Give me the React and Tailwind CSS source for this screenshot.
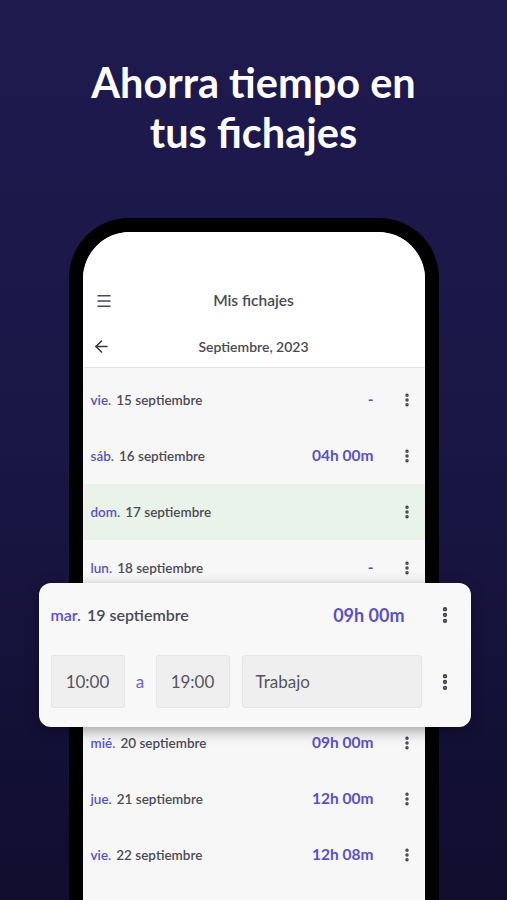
import { Menu, ArrowLeft, EllipsisVertical } from 'lucide-react';

const rows = [
  { dia: 'vie.', fecha: '15 septiembre', horas: '-' },
  { dia: 'sáb.', fecha: '16 septiembre', horas: '04h 00m' },
  { dia: 'dom.', fecha: '17 septiembre', horas: '', festivo: true },
  { dia: 'lun.', fecha: '18 septiembre', horas: '-' },
  { abierto: true },
  { dia: 'mié.', fecha: '20 septiembre', horas: '09h 00m' },
  { dia: 'jue.', fecha: '21 septiembre', horas: '12h 00m' },
  { dia: 'vie.', fecha: '22 septiembre', horas: '12h 08m' },
];

function Kebab({ className = '' }) {
  return <EllipsisVertical className={`text-[#3d3d45] ${className}`} strokeWidth={3.2} />;
}

function Fila({ r }) {
  return (
    <div className={`h-[56px] flex items-center pl-[8px] pr-[10px] ${r.festivo ? 'bg-[#e9f3e9]' : ''}`}>
      <div className="flex-1 flex items-baseline gap-[5px] text-[13.5px]">
        <span className="font-semibold text-[#5a51c4]">{r.dia}</span>
        <span className="font-semibold text-[#4b4b55]">{r.fecha}</span>
      </div>
      <span className="text-[15.5px] font-bold text-[#5a51c4]">{r.horas}</span>
      <div className="w-[41px] flex justify-end">
        <Kebab className="w-[16px] h-[16px]" />
      </div>
    </div>
  );
}

function Tarjeta() {
  return (
    <div className="absolute left-[-44px] right-[-46px] top-[-13px] bottom-[-12px] z-10 bg-[#f8f8f8] rounded-[12px] shadow-[0_4px_14px_rgba(0,0,0,0.35)] px-[12px] flex flex-col">
      <div className="h-[64px] flex items-center">
        <div className="flex-1 flex items-baseline gap-[6px] text-[16px]">
          <span className="font-semibold text-[#5a51c4]">mar.</span>
          <span className="font-semibold text-[#4b4b55]">19 septiembre</span>
        </div>
        <span className="text-[18px] font-bold text-[#5a51c4]">09h 00m</span>
        <div className="w-[54px] flex justify-end pr-[4px]">
          <Kebab className="w-[20px] h-[20px]" />
        </div>
      </div>
      <div className="flex items-center mt-[8px]">
        <div className="w-[74px] h-[53px] rounded-[3px] bg-[#efefef] border border-[#e6e6e6] flex items-center justify-center text-[17px] text-[#55555c]">10:00</div>
        <span className="w-[31px] text-center text-[17px] text-[#6a62c8]">a</span>
        <div className="w-[74px] h-[53px] rounded-[3px] bg-[#efefef] border border-[#e6e6e6] flex items-center justify-center text-[17px] text-[#55555c]">19:00</div>
        <div className="ml-[12px] w-[180px] h-[53px] rounded-[3px] bg-[#efefef] border border-[#e6e6e6] flex items-center pl-[13px] text-[17px] text-[#55555c]">Trabajo</div>
        <div className="flex-1 flex justify-end pr-[4px]">
          <Kebab className="w-[20px] h-[20px]" />
        </div>
      </div>
    </div>
  );
}

export default function App() {
  return (
    <div className="w-[507px] h-[900px] overflow-hidden bg-gradient-to-b from-[#1f1a4e] via-[#1a1645] to-[#100d2e] font-['Lato','Noto_Sans',sans-serif]">
      <h1 className="pt-[57px] text-center text-white text-[41.5px] leading-[50px] font-bold">
        Ahorra tiempo en<br />tus fichajes
      </h1>

      <div className="mt-[61px] mx-auto w-[370px] h-[700px] bg-black rounded-t-[60px] pt-[14px] px-[14px]">
        <div className="h-full bg-[#f7f7f7] rounded-t-[47px] flex flex-col">
          <div className="bg-white rounded-t-[47px] pt-[44px] border-b border-[#e2e2e2]">
            <div className="h-[50px] flex items-center px-[12px]">
              <Menu className="w-[18px] h-[18px] text-[#4a4a52]" strokeWidth={2} />
              <span className="flex-1 text-center pr-[18px] text-[15.5px] font-semibold text-[#4a4a52]">Mis fichajes</span>
            </div>
            <div className="h-[41px] flex items-center px-[9px]">
              <ArrowLeft className="w-[19px] h-[19px] text-[#3a3a42]" strokeWidth={2} />
              <span className="flex-1 text-center pr-[19px] text-[14px] font-semibold text-[#4a4a52]">Septiembre, 2023</span>
            </div>
          </div>
          <div className="pt-[4px]">
            {rows.map((r, i) =>
              r.abierto ? (
                <div key={i} className="relative h-[119px]">
                  <Tarjeta />
                </div>
              ) : (
                <Fila key={i} r={r} />
              )
            )}
          </div>
        </div>
      </div>
    </div>
  );
}
